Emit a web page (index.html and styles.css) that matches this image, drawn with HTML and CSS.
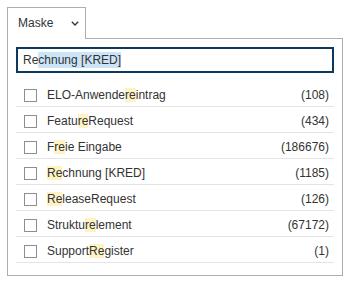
FILE: index.html
```html
<!DOCTYPE html>
<html lang="de">
<head>
<meta charset="utf-8">
<title>Maske</title>
<link rel="stylesheet" href="styles.css">
</head>
<body>
<div class="wrap">
  <div class="tab">
    <span class="tab-label">Maske</span>
    <svg class="chevron" width="8" height="5" viewBox="0 0 8 5"><path d="M0.8 0.8 L4 4 L7.2 0.8" fill="none" stroke="#333" stroke-width="1.3"/></svg>
  </div>
  <div class="panel">
    <div class="search"><span>Re</span><span class="sel">chnung [KRED]</span></div>
    <ul class="list">
      <li class="row"><span class="box"></span><span class="name">ELO-Anwende<mark>re</mark>intrag</span><span class="count">(108)</span></li>
      <li class="row"><span class="box"></span><span class="name">Featu<mark>re</mark>Request</span><span class="count">(434)</span></li>
      <li class="row"><span class="box"></span><span class="name">F<mark>re</mark>ie Eingabe</span><span class="count">(186676)</span></li>
      <li class="row"><span class="box"></span><span class="name"><mark>Re</mark>chnung [KRED]</span><span class="count">(1185)</span></li>
      <li class="row"><span class="box"></span><span class="name"><mark>Re</mark>leaseRequest</span><span class="count">(126)</span></li>
      <li class="row"><span class="box"></span><span class="name">Struktu<mark>re</mark>lement</span><span class="count">(67172)</span></li>
      <li class="row"><span class="box"></span><span class="name">Support<mark>Re</mark>gister</span><span class="count">(1)</span></li>
    </ul>
  </div>
</div>
</body>
</html>
```
FILE: styles.css
```css
* { box-sizing: border-box; }
html, body { margin: 0; background: #fff; }
body {
  font-family: "Liberation Sans", Arial, sans-serif;
  font-size: 12px;
  color: #333;
}
.wrap {
  padding: 7px 0 0 7px;
  width: 343px;
}
.tab {
  position: relative;
  z-index: 1;
  display: flex;
  align-items: center;
  width: 79px;
  height: 32px;
  margin-bottom: -1px;
  padding: 0 0 1px 10px;
  border: 1px solid #adadad;
  border-bottom: none;
  background: #fff;
}
.tab-label { line-height: 14px; }
.chevron { margin-left: 18px; margin-top: 1px; display: block; }
.panel {
  width: 336px;
  border: 1px solid #adadad;
  padding: 8px 8px 12px 8px;
}
.search {
  height: 26px;
  border: 2px solid #0d3a5c;
  padding: 1px 0 0 5px;
  line-height: 21px;
  color: #333;
  white-space: nowrap;
}
.sel { background: #cce4f7; padding: 1px 0; }
.list {
  list-style: none;
  margin: 8px 0 0;
  padding: 0;
}
.row {
  display: flex;
  align-items: center;
  height: 26px;
  padding: 3px 5px 0 8px;
  border-bottom: 1px solid #e4e4e4;
  line-height: 22px;
}
.box {
  width: 13px;
  height: 13px;
  border: 1px solid #8e8e8e;
  background: #fff;
  flex: none;
}
.name {
  margin-left: 10px;
  flex: 1;
  white-space: nowrap;
}
.count { white-space: nowrap; }
mark {
  background: #fff3c4;
  color: inherit;
}
```
